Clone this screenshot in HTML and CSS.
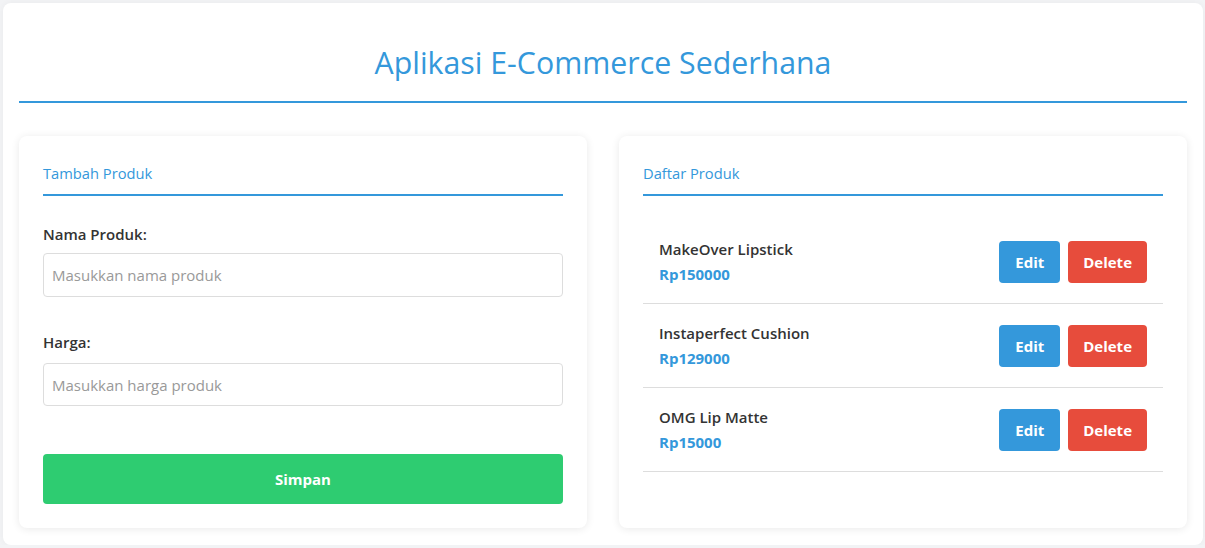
FILE: index.html
```html
<!DOCTYPE html>
<html lang="id">
<head>
<meta charset="utf-8">
<title>Aplikasi E-Commerce Sederhana</title>
<link rel="stylesheet" href="styles.css">
</head>
<body>
<div class="app">
  <h1 class="app-title">Aplikasi E-Commerce Sederhana</h1>
  <div class="panels">
    <section class="card">
      <h2 class="card-title">Tambah Produk</h2>
      <form class="form">
        <div class="field">
          <label class="label" for="nama">Nama Produk:</label>
          <input class="input" id="nama" type="text" placeholder="Masukkan nama produk">
        </div>
        <div class="field">
          <label class="label" for="harga">Harga:</label>
          <input class="input" id="harga" type="text" placeholder="Masukkan harga produk">
        </div>
        <button type="button" class="btn btn-save">Simpan</button>
      </form>
    </section>
    <section class="card">
      <h2 class="card-title">Daftar Produk</h2>
      <ul class="list">
        <li class="item">
          <div class="info">
            <div class="name">MakeOver Lipstick</div>
            <div class="price">Rp150000</div>
          </div>
          <div class="actions">
            <button type="button" class="btn btn-edit">Edit</button>
            <button type="button" class="btn btn-delete">Delete</button>
          </div>
        </li>
        <li class="item">
          <div class="info">
            <div class="name">Instaperfect Cushion</div>
            <div class="price">Rp129000</div>
          </div>
          <div class="actions">
            <button type="button" class="btn btn-edit">Edit</button>
            <button type="button" class="btn btn-delete">Delete</button>
          </div>
        </li>
        <li class="item">
          <div class="info">
            <div class="name">OMG Lip Matte</div>
            <div class="price">Rp15000</div>
          </div>
          <div class="actions">
            <button type="button" class="btn btn-edit">Edit</button>
            <button type="button" class="btn btn-delete">Delete</button>
          </div>
        </li>
      </ul>
    </section>
  </div>
</div>
</body>
</html>
```

FILE: styles.css
```css
* { box-sizing: border-box; }

html, body {
  margin: 0;
  padding: 0;
}

body {
  background: #f2f3f5;
  font-family: "Segoe UI", "Open Sans", "Noto Sans", sans-serif;
  color: #333;
  padding: 3px 2px 0 3px;
}

.app {
  width: 1200px;
  background: #fff;
  border-radius: 8px;
  padding: 0 16px 16px;
  box-shadow: 0 0 6px rgba(0, 0, 0, 0.04);
  min-height: 542px;
}

.app-title {
  margin: 0;
  padding: 40px 0 18px;
  text-align: center;
  font-size: 30.3px;
  line-height: 40px;
  font-weight: 400;
  color: #3498db;
  border-bottom: 2px solid #3498db;
}

.panels {
  margin-top: 33px;
  display: grid;
  grid-template-columns: 1fr 1fr;
  gap: 32px;
}

.card {
  background: #fff;
  border-radius: 8px;
  padding: 24px;
  box-shadow: 0 1px 8px rgba(0, 0, 0, 0.09);
}

.card-title {
  margin: 0;
  font-size: 14.7px;
  line-height: 26px;
  font-weight: 400;
  color: #3498db;
  padding-bottom: 8px;
  border-bottom: 2px solid #3498db;
}

.form {
  padding-top: 27px;
}

.field {
  margin-bottom: 34px;
}

.label {
  display: block;
  font-size: 15px;
  line-height: 22px;
  font-weight: 600;
  color: #333;
  margin-bottom: 8px;
}

.field + .field .label {
  margin-bottom: 10px;
}

.input {
  display: block;
  width: 100%;
  height: 44px;
  padding: 0 8px;
  border: 1px solid #ddd;
  border-radius: 4px;
  font-family: inherit;
  font-size: 15px;
  color: #333;
  background: #fff;
}

.field + .field .input {
  height: 43px;
}

.input::placeholder {
  color: #999;
}

.btn {
  border: 0;
  border-radius: 4px;
  font-family: inherit;
  font-size: 15px;
  font-weight: 700;
  color: #fff;
  cursor: pointer;
}

.btn-save {
  display: block;
  width: 100%;
  height: 50px;
  margin-top: 48px;
  background: #2ecc71;
}

.field + .field {
  margin-bottom: 0;
}

.list {
  list-style: none;
  margin: 24px 0 0;
  padding: 0;
}

.item {
  display: flex;
  align-items: center;
  justify-content: space-between;
  padding: 16px;
  border-bottom: 1px solid #ddd;
}

.name {
  font-size: 15px;
  line-height: 26px;
  font-weight: 600;
  color: #333;
}

.price {
  font-size: 15px;
  line-height: 25px;
  font-weight: 700;
  color: #3498db;
}

.actions {
  display: flex;
  gap: 8px;
}

.btn-edit,
.btn-delete {
  height: 42px;
  padding: 0 16px;
}

.btn-delete {
  padding: 0 15px;
}

.btn-edit { background: #3498db; }
.btn-delete { background: #e74c3c; }
```
